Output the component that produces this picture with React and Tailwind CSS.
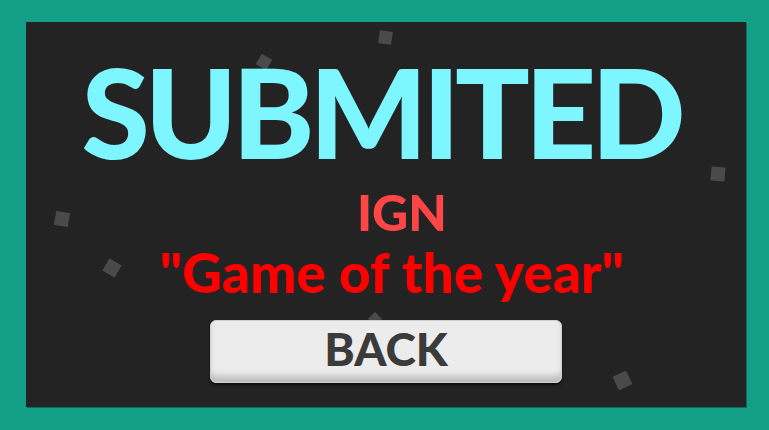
export default function App() {
  const particles = [
    { l: 379, t: 31, s: 13, r: 8 },
    { l: 258, t: 56, s: 12, r: 30 },
    { l: 711, t: 167, s: 14, r: 5 },
    { l: 55, t: 212, s: 14, r: 10 },
    { l: 105, t: 261, s: 14, r: 30 },
    { l: 615, t: 373, s: 15, r: -25 },
    { l: 370, t: 314, s: 10, r: 45 },
  ];
  return (
    <div className="w-[769px] h-[430px] bg-[#129e87] pt-[22px] pl-[26px] pr-[23px] pb-[23px] overflow-hidden">
      <div className="relative w-full h-full bg-[#232323] shadow-[1px_1px_0_#0b6e5d] flex flex-col items-center">
        {particles.map((p, i) => (
          <div
            key={i}
            className="absolute bg-[#4a4a4a] blur-[0.6px]"
            style={{ left: p.l - 26, top: p.t - 22, width: p.s, height: p.s, transform: `rotate(${p.r}deg)` }}
          />
        ))}
        <div className="relative mt-[27px] mr-[10px] text-[#7df6ff] font-['Lato',sans-serif] font-black text-[124px] leading-[124px] tracking-[-5px]">
          SUBMITED
        </div>
        <div className="relative mt-[14px] ml-[32px] text-[#ff4646] font-['Lato',sans-serif] font-black text-[50px] leading-[50px]">
          IGN
        </div>
        <div className="relative mt-[8px] ml-[12px] text-[#ff0000] font-['Lato',sans-serif] font-black text-[55px] leading-[55px]">
          "Game of the year"
        </div>
        <div className="relative mt-[20px] w-[352px] h-[63px] rounded-[6px] bg-[#ececec] border border-[#cfcfcf] shadow-[inset_0_-8px_6px_-2px_#bdbdbd,0_2px_3px_rgba(0,0,0,0.6)] flex items-center justify-center pb-[6px]">
          <span className="text-[#3b3b3b] font-['Lato',sans-serif] font-black text-[46px] leading-none">BACK</span>
        </div>
      </div>
    </div>
  );
}
